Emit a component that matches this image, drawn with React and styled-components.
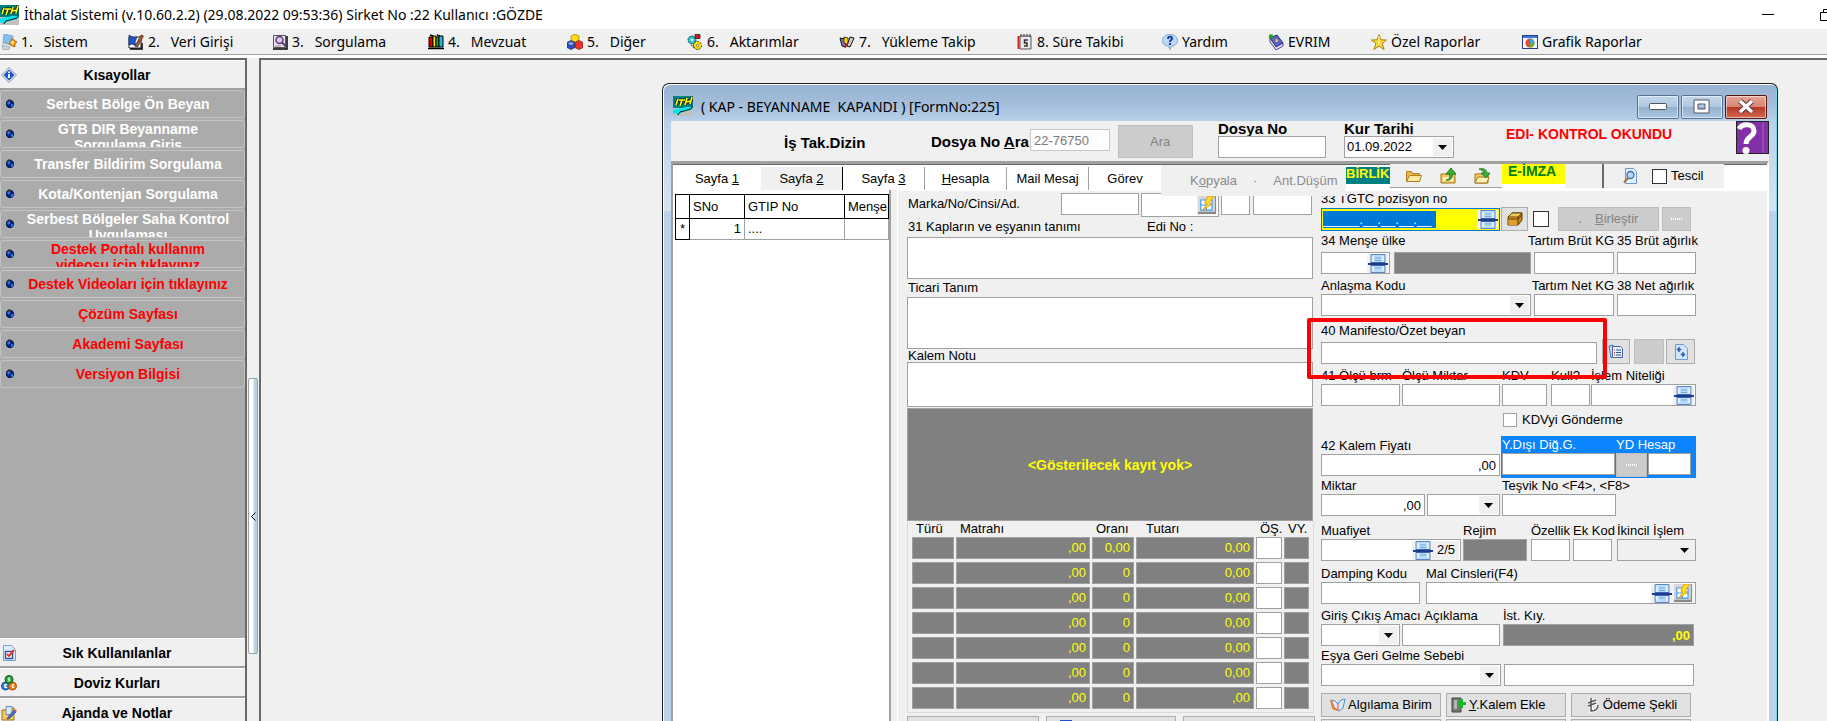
import React, { useId } from "react";
import styled, { createGlobalStyle, css } from "styled-components";

const ui = '"Noto Sans", "Open Sans", sans-serif';
const form = '"Liberation Sans", Arial, sans-serif';
const c = { face: "#f0f0f0", line: "#a0a0a0", dark: "#696969", slate: "#808080", off: "#cccccc" };

const GlobalStyle = createGlobalStyle`
  *, *::before, *::after { box-sizing: border-box; }
  html, body, #root { height: 100%; }
  body { margin: 0; overflow: hidden; background: ${c.face}; color: #000; font: 13px/16px ${form}; }
  button, input, select, textarea { font: inherit; color: inherit; margin: 0; padding: 0; border-radius: 0; }
  svg { display: block; flex: none; }
`;

/* ---------- application shell ---------- */
const Shell = styled.div`
  display: flex; flex-direction: column; height: 100vh; overflow: hidden;
`;
const TitleBar = styled.header`
  display: flex; align-items: center; flex: none; height: 29px; background: #fff; overflow: hidden;
`;
const AppTitle = styled.h1`
  flex: 1; margin: 0 0 0 5px; font: 400 14px/20px ${ui}; white-space: nowrap;
`;
const SystemButton = styled.button`
  flex: none; width: ${(p) => p.$w}px; height: 29px; border: 0; background: none;
  display: flex; align-items: center; justify-content: ${(p) => (p.$end ? "flex-end" : "center")};
`;
const MenuBar = styled.nav`
  flex: none; height: 26px; background: ${c.face}; border-bottom: 1px solid ${c.line};
  display: grid; align-items: center;
  grid-template-columns: 127px 144px 156px 139px 120px 152px 178px 145px 106px 103px 151px auto;
  justify-content: start; padding-left: 1px;
`;
const MenuItem = styled.button`
  display: flex; align-items: center; gap: 4px; border: 0; background: none;
  font: 14px/20px ${ui}; white-space: pre; text-align: left;
`;
const Work = styled.main`
  flex: 1; min-height: 0; display: grid; grid-template-columns: 247px 12px 1fr;
  border-top: 3px solid #fff;
`;

/* ---------- side bar ---------- */
const Side = styled.aside`
  display: flex; flex-direction: column; min-height: 0; overflow: hidden; background: #ababab;
  border-top: 2px solid ${c.dark}; border-right: 2px solid ${c.dark};
`;
const SideHead = styled.button`
  flex: none; display: flex; align-items: center; height: 30px; width: 100%;
  padding: 0 28px 0 1px; border: 0; border-top: 1px solid #fff; border-bottom: 2px solid ${c.line};
  background: ${c.face}; font-weight: 700; font-size: 14px;
  span { flex: 1; text-align: center; }
`;
const SideList = styled.ul`
  flex: 1; min-height: 0; margin: 0; padding: 0; list-style: none;
  display: flex; flex-direction: column; gap: 2px;
`;
const SideLink = styled.button`
  display: flex; align-items: center; gap: 10px; width: 100%; height: 28px; overflow: hidden;
  padding: 0 13px 0 4px; border: 1px solid #c3c3c3; border-radius: 3px; background: none;
  color: ${(p) => (p.$hot ? "#ff0000" : "#fff")}; font-weight: 700; font-size: 14px;
  span { flex: 1; max-height: 26px; overflow: hidden; text-align: center; }
`;
const SideFoot = styled.div`
  flex: none; height: 83px; overflow: hidden;
`;
const Splitter = styled.div`
  display: flex; flex-direction: column; padding: 320px 1px 0 1px; background: ${c.face};
`;
const SplitHandle = styled.button`
  height: 276px; width: 10px; border: 1px solid ${c.line}; border-radius: 2px;
  background: linear-gradient(90deg, #fff 50%, #bfdcea 60%, #b0cfe0);
  display: flex; align-items: center; justify-content: center;
`;

/* ---------- child window ---------- */
const Mdi = styled.section`
  min-width: 0; min-height: 0; display: flex; overflow: hidden; background: ${c.face};
  border-top: 2px solid ${c.dark}; border-left: 2px solid ${c.dark}; padding: 23px 49px 0 401px;
`;
const Child = styled.article`
  flex: 1; min-width: 0; display: flex; flex-direction: column; overflow: hidden;
  border: 1px solid #222; border-bottom: 0; border-radius: 7px 7px 0 0; padding: 0 8px;
  box-shadow: inset 1px 1px 0 #fff, inset -1px 0 0 #6fd9e4;
  background: linear-gradient(#98b4d2 0, #a3bddb 20px, #b9d1ea 38px, #d6e4f3 126px, #b9d1ea 128px);
`;
const ChildBar = styled.header`
  flex: none; display: flex; align-items: center; height: 37px; padding: 0 2px;
`;
const ChildTitle = styled.h2`
  flex: 1; margin: 0 0 0 8px; font: 400 14px/20px ${ui}; white-space: pre; padding-top: 8px;
`;
const LogoSlot = styled.span` padding-top: 6px; `;
const CaptionButton = styled.button`
  width: 42px; height: 24px; margin: 8px 0 0 2px; border: 1px solid ${(p) => (p.$close ? "#5a1410" : "#58728f")};
  border-radius: 2px; display: flex; align-items: center; justify-content: center;
  box-shadow: inset 0 0 0 1px rgba(255, 255, 255, 0.55);
  background: ${(p) => p.$close
    ? "linear-gradient(#e6a596 0, #d98574 48%, #b8392a 52%, #cf6a50 100%)"
    : "linear-gradient(#c3d6ea 0, #b0c8e2 48%, #94b1d0 52%, #abc6e0 100%)"};
`;

const SearchStrip = styled.div`
  flex: none; display: flex; height: 40px; background: ${c.face};
`;
const Strong = styled.span`
  font-weight: 700; font-size: 15px; line-height: 14px; white-space: nowrap;
`;
const StripTitle = styled(Strong)` width: 147px; padding: 15px 0 0 0; margin-left: 113px; `;
const StripLabel = styled(Strong)` width: 99px; padding-top: 14px; `;
const StripBox = styled.div` padding-top: ${(p) => p.$top}px; width: ${(p) => p.$w}px; margin-right: ${(p) => p.$gap}px; `;
const Stack = styled.div`
  display: flex; flex-direction: column; width: ${(p) => p.$w}px; margin-right: ${(p) => p.$gap}px;
  padding-top: 1px;
`;
const Alert = styled.strong`
  flex: 1; padding-top: 5px; color: #ff0000; font-size: 14px; white-space: nowrap;
`;

const TabStrip = styled.div`
  flex: none; display: flex; align-items: flex-start; height: 29px; background: #fff;
  border-top: 3px solid ${c.line}; border-left: 2px solid ${c.line}; border-right: 2px solid #fff;
  box-shadow: inset 0 1px 0 ${c.dark};
`;
const Tab = styled.button`
  flex: none; display: flex; align-items: center; justify-content: center;
  width: ${(p) => p.$w}px; height: 23px; margin-top: 3px; border: 0; white-space: pre;
  background: ${(p) => (p.$on ? c.face : "#fff")};
  border-right: ${(p) => (p.$on ? "1px solid #000" : p.$rule ? `1px solid ${c.line}` : "0")};
`;
const Disabled = styled.div`
  flex: none; position: relative; z-index: 1; display: flex; align-items: center; gap: 16px;
  width: 185px; height: 31px; padding-left: 29px; margin-top: 1px; background: ${c.face};
`;
const PlainButton = styled.button`
  border: 0; background: none; white-space: nowrap; color: #8b8b8b;
`;
const Chip = styled.strong`
  flex: none; display: block; background: ${(p) => p.$bg}; color: ${(p) => p.$fg};
  font-size: ${(p) => p.$fs}px; line-height: ${(p) => p.$fs + 1}px; height: ${(p) => p.$h}px; width: ${(p) => p.$w}px;
  margin-top: ${(p) => p.$mt || 0}px; padding-left: ${(p) => p.$pl}px; white-space: nowrap;
`;
const Folders = styled.div`
  flex: none; display: flex; align-items: center; gap: 18px; width: 112px; height: 24px; padding-left: 16px;
  background: ${c.face}; border-bottom: 1px solid ${c.line};
`;
const IconButton = styled.button` border: 0; background: none; display: flex; `;
const Blank = styled.div` width: 39px; height: 24px; background: ${c.face}; border-right: 2px solid ${c.dark}; `;
const Register = styled.div`
  display: flex; align-items: center; gap: 14px; width: 120px; height: 24px; padding-left: 18px;
  background: ${c.face};
  label { display: flex; align-items: center; gap: 4px; }
`;
const Check = styled.input`
  appearance: none; width: ${(p) => p.$s}px; height: ${(p) => p.$s}px; flex: none;
  border: 1px solid ${(p) => (p.$strong ? "#333" : c.line)}; background: #fff;
`;

const Body = styled.div`
  flex: 1; min-height: 0; display: grid; grid-template-columns: 220px 6px minmax(0, 1fr); background: ${c.face};
  overflow: hidden;
`;
const ListPane = styled.div`
  background: #fff; padding: 4px 0 0 2px; border-left: 2px solid ${c.line}; border-right: 2px solid ${c.line};
`;
const Grid = styled.table`
  table-layout: fixed; width: 100%; border-collapse: collapse; font-size: 13px;
  th, td { padding: 0 3px; font-weight: 400; text-align: left; overflow: hidden; white-space: nowrap; }
  th { height: 24px; border: 1px solid #000; }
  td { height: 21px; border: 1px solid ${c.line}; }
  td:first-child { border: 1px solid #000; padding: 0; text-align: center; }
  td:nth-child(2) { text-align: right; }
`;
const Col = styled.col` width: ${(p) => p.$w}px; `;
const FormPane = styled.div`
  display: flex; gap: 6px; padding: 0 0 0 9px; border-top: 1px solid #fff; border-left: 1px solid #fff;
  border-right: 2px solid #fff; overflow: hidden;
`;

/* ---------- form parts ---------- */
const inputBox = css`
  display: block; height: 22px; width: 100%; border: 1px solid ${c.line}; background: #fff;
  padding: 0 3px; outline: none;
`;
const Box = styled.input`
  ${inputBox}
  ${(p) => p.$muted && css`color: #7a7a7a; border-color: #c8c8c8;`}
  ${(p) => p.$dark && css`background: ${c.slate}; color: #ffff00; font-weight: 700;`}
  text-align: ${(p) => (p.$right ? "right" : "left")};
`;
const Combo = styled.div`
  display: flex; align-items: center; height: ${(p) => p.$h || 22}px; width: 100%; border: 1px solid ${c.line};
  background: ${(p) => (p.$flat ? c.face : "#fff")}; padding-right: 1px;
  input, select { flex: 1; min-width: 0; width: 0; height: 20px; border: 0; background: none; outline: none; padding-left: 2px; appearance: none; }
`;
const Arrow = styled.span`
  width: 19px; height: 18px; background: ${c.face}; display: flex; align-items: center; justify-content: center;
`;
const MiniButton = styled.button`
  display: flex; align-items: center; justify-content: ${(p) => (p.$start ? "flex-start" : "center")}; gap: 2px; flex: none; white-space: nowrap;
  width: ${(p) => p.$w}px; height: ${(p) => p.$h || 24}px; padding-left: ${(p) => p.$start || 0}px;
  border: 1px solid ${(p) => (p.$off ? "#bfbfbf" : "#adadad")}; background: ${(p) => (p.$off ? c.off : "#e1e1e1")};
  color: ${(p) => (p.$off ? "#838383" : "#000")};
`;
const Inset = styled.button`
  flex: none; height: 19px; border: 0; background: ${c.face}; width: ${(p) => p.$w}px;
  display: flex; align-items: center; justify-content: center;
`;
const Row = styled.div`
  position: relative; display: flex; align-items: ${(p) => p.$align || "flex-end"}; margin-top: ${(p) => p.$gap || 0}px;
`;
const FieldBox = styled.div`
  flex: none; display: flex; flex-direction: column; width: ${(p) => p.$w}px; margin-right: ${(p) => p.$mr ?? 3}px;
  align-items: ${(p) => p.$align || "flex-start"};
`;
const Spacer = styled.div` flex: none; width: ${(p) => p.$w}px; `;
const Label = styled.label` display: block; height: ${(p) => (p.$tall ? 19 : 16)}px; white-space: nowrap; `;

const column = css`
  flex: none; display: flex; flex-direction: column;
  > * { flex-shrink: 0; }
`;
const Middle = styled.div` ${column} width: 408px; `;
const Right = styled.div` ${column} width: 380px; `;
const Area = styled.textarea`
  display: block; width: 406px; height: ${(p) => p.$h}px; border: 1px solid ${c.line}; background: #fff; resize: none; outline: none;
`;
const Caption = styled.label`
  display: flex; align-items: center; height: ${(p) => p.$h}px; padding-left: 1px; white-space: nowrap;
`;
const CaptionRow = styled.div` display: grid; grid-template-columns: 239px 1fr; `;
const Empty = styled.div`
  display: flex; align-items: center; justify-content: center; width: 406px; height: 113px; margin-top: 1px;
  border: 1px solid ${c.line}; background: ${c.slate}; color: #ffff00; font-weight: 700; font-size: 14px;
`;
const Taxes = styled.table`
  table-layout: fixed; width: 407px; border-collapse: separate; border-spacing: 2px 3px; padding: 0 2px;
  border: 1px solid #dcdcdc; border-top: 0;
  th { height: 10px; padding: 0 0 0 4px; font-weight: 400; text-align: left; line-height: 10px; white-space: nowrap; }
  th.wide { padding-left: 10px; }
  td { height: 22px; padding: 0 3px; border: 1px solid ${c.line}; background: ${c.slate}; color: #ffff00; text-align: right; line-height: 16px; }
  td.open { padding: 0; background: #fff; }
  td input { display: block; width: 100%; height: 20px; border: 0; background: none; outline: none; }
`;
const Buttons = styled.div`
  display: flex; gap: ${(p) => p.$g}px; margin-top: ${(p) => p.$gap}px;
`;
const Goods = styled.div`
  display: flex; align-items: center; width: 179px; height: 23px; margin-right: 1px; border: 1px solid #0078d7; padding: 1px;
  background: #ffff00;
`;
const Mask = styled.input`
  width: 113px; height: 17px; border: 0; outline: none; background: #0078d7; color: #fff; line-height: 16px; margin-right: auto;
`;
const Foreign = styled.div`
  display: grid; grid-template-columns: 113px 31px 43px; column-gap: 1px; width: 195px; height: 42px; padding: 1px 1px 0;
  background: #0a84ff; color: #fff; align-content: start;
  label { height: 16px; white-space: nowrap; }
  label:nth-child(2) { grid-column: 2 / 4; }
  input { color: #000; }
`;
const Marker = styled.div`
  position: absolute; left: -14px; top: -5px; width: 300px; height: 61px; border: 4px solid #ff0000; border-radius: 2px;
  pointer-events: none; z-index: 2;
`;
const CheckLine = styled.label`
  display: flex; align-items: center; gap: 5px; height: 14px; margin: 7px 0 9px 182px;
`;

/* ---------- drawings ---------- */
const Svg = ({ s = 16, h, children, vb }) => (
  <svg width={s} height={h || s} viewBox={vb || "0 0 16 16"} aria-hidden="true">{children}</svg>
);
const Logo = ({ s = 20 }) => (
  <svg width={s} height="20" viewBox={s === 20 ? "0 0 20 20" : "1 0 19 20"} preserveAspectRatio="none" aria-hidden="true">
    <rect width="20" height="20" fill="#c0c0c0" /><rect width="20" height="12" fill="#008080" />
    <path d="M0 14l13-3h7l-2 3-11 3-3 2-2-2-2 1z" fill="#00e5ee" /><path d="M5 19l2-3 11-3 2-3" fill="none" stroke="#111" />
    <path d="M3 9l2-6M6 4h6M7 10l2-6M12 9l2-7M17 8l2-7M13 6l5-1" fill="none" stroke="#111" strokeWidth="3.2" />
    <path d="M3 9l2-6M6 4h6M7 10l2-6M12 9l2-7M17 8l2-7M13 6l5-1" fill="none" stroke="#ffff00" strokeWidth="1.7" />
  </svg>
);
const icons = {
  system: <Svg><path d="M3 0l9 2-1 9-9-2z" fill="#7fc0f0" stroke="#8fa5b8" /><path d="M1 11l8 2-1 2.500H2z" fill="#c8d4de" stroke="#8090a0" strokeWidth=".6" /><path d="M11 4l2 2 3 2-2 2v3l-3-1-3-2 2-3z" fill="#f39a22" stroke="#9a5a14" strokeWidth=".7" /><circle cx="11.500" cy="8.500" r="1.600" fill="#ffe27a" /></Svg>,
  entry: <Svg><path d="M1 3h12v11H1z" fill="#fff" stroke="#223" /><path d="M1 1l5 3 3-1-2 5 1 4-4-2-3 1z" fill="#2355c8" stroke="#102a70" strokeWidth=".7" /><path d="M7 12l6-11 2.500 1-6 11z" fill="#a65a32" stroke="#4b2414" strokeWidth=".7" /><path d="M2 15h12V9" stroke="#000" fill="none" strokeWidth="1.500" /></Svg>,
  query: <Svg><path d="M1.500 1.500h12v12h-12z" fill="#ece6f2" stroke="#555" /><path d="M1 15h14V2" stroke="#000" fill="none" strokeWidth="1.500" /><circle cx="7.500" cy="6" r="3.500" fill="#d9c6ec" stroke="#5a3d78" strokeWidth="1.500" /><path d="M10 8.500l4 4" stroke="#5a3d78" strokeWidth="2" /><path d="M3 12h6" stroke="#888" /></Svg>,
  books: <Svg><path d="M1 3h4v10H1z" fill="#d00" stroke="#000" /><path d="M5 2h3v11H5z" fill="#ffe100" stroke="#000" /><path d="M8 3h3v10H8z" fill="#1aa34a" stroke="#000" /><path d="M11 2h4v11h-4z" fill="#22b5d8" stroke="#000" /><path d="M0 14.500h16M2 1l3 1M9 1l3 1" stroke="#000" strokeWidth="1.500" /></Svg>,
  cubes: <Svg><path d="M8 0l4 2v4L8 8.500 4 6V2z" fill="#ffd91a" stroke="#a87b00" strokeWidth=".7" /><path d="M4 6.500l4 2v5l-4 2-4-2v-5z" fill="#2c4fc4" stroke="#14286c" strokeWidth=".7" /><path d="M4 8l3 1.500-3 1.500-3-1.500z" fill="#9db4f5" /><path d="M12 6.500l4 2v5l-4 2-4-2v-5z" fill="#e8352a" stroke="#7c120c" strokeWidth=".7" /></Svg>,
  transfer: <Svg><circle cx="5" cy="6" r="4" fill="#22c4c8" stroke="#245" strokeDasharray="2 1" /><circle cx="10.500" cy="11.500" r="4" fill="#ffe100" stroke="#332" strokeDasharray="2 1" /><path d="M8 .5h5v4H8zM4 11l4 3" fill="#e3131c" stroke="#222" strokeWidth=".8" /><circle cx="5" cy="6" r="1.300" fill="#fff" /><circle cx="10.500" cy="11.500" r="1.200" fill="#fff" stroke="#333" strokeWidth=".6" /></Svg>,
  loading: <Svg><path d="M1 4l5 1 1 8-4-1z" fill="#77c" stroke="#111" /><path d="M5 3l4 1v7l-4-2z" fill="#ffe100" stroke="#111" strokeWidth=".8" /><path d="M8 12l3-9 4 1-4 9z" fill="#cfcfcf" stroke="#111" /><path d="M6 14l3-6" stroke="#d22" strokeWidth="1.500" /></Svg>,
  time: <Svg><path d="M3 2h11v13H3z" fill="#e9e9ee" stroke="#555" /><path d="M1.500 2v13" stroke="#d22" strokeWidth="2" /><path d="M4 0v3M7 0v3M10 0v3M13 0v3" stroke="#333" /><path d="M11 6H7.500v3H10v3H7" stroke="#333" fill="none" strokeWidth="1.500" /></Svg>,
  help: <Svg><path d="M8 .5c4.500 0 7.500 2.500 7.500 6S12.500 12 9.500 12L8 15.500 6.500 12C3.500 12 .5 10 .5 6.500S3.500.5 8 .5z" fill="#bcd9f4" stroke="#7aa3cc" /><path d="M6 5c0-3 4-3 4-.500C10 6 8 6 8 8" stroke="#1c3fa0" fill="none" strokeWidth="2" /><rect x="7" y="9" width="2" height="2" fill="#1c3fa0" /></Svg>,
  evrim: <Svg><path d="M2 4l7-3 6 8-7 4z" fill="#5b62c8" stroke="#23286c" /><path d="M8 13l7-4v3l-7 4-6-8V4z" fill="#dfe2f4" stroke="#23286c" strokeWidth=".8" /><circle cx="3" cy="2.500" r="2.300" fill="#22a322" /><path d="M8 5l1.500 3M7.300 7.300L10 6" stroke="#ffc83a" strokeWidth="1.300" /></Svg>,
  star: <Svg><path d="M8 .5l1.900 5.300 5.600.200-4.400 3.400 2 6.100L8 12l-5.100 3.500 2-6.100L.5 6l5.600-.200z" fill="#ffd93a" stroke="#b07f12" /><path d="M8 2v9" stroke="#fff3b0" /></Svg>,
  chart: <Svg><rect x=".5" y="1.500" width="15" height="13" fill="#f4f6ff" stroke="#2a3a8c" /><rect x="1" y="2" width="14" height="2" fill="#3d7be0" /><circle cx="8" cy="9" r="4.500" fill="#e8482e" /><path d="M8 9V4.500A4.500 4.500 0 0 1 12.500 9z" fill="#38a8e0" /><path d="M8 9h4.500A4.500 4.500 0 0 1 8 13.500z" fill="#57b544" /></Svg>,
  info: <Svg><path d="M8 .5L15.500 8 8 15.500.5 8z" fill="#dfe5f2" stroke="#8b98b8" /><path d="M8 2.500L13.500 8 8 13.500 2.500 8z" fill="#1d56d0" /><path d="M8 7v4M8 4.500v1.500" stroke="#fff" strokeWidth="2" /></Svg>,
  tick: <Svg><path d="M2.500.5h8l4 4v11h-12z" fill="#dcecfb" stroke="#7ba0cc" /><rect x="4.500" y="6.500" width="7" height="7" fill="#fff" stroke="#2b4f9e" strokeWidth="1.400" /><path d="M6 9l2 2 5-6" stroke="#e8361c" strokeWidth="2" fill="none" /></Svg>,
  money: <Svg><circle cx="4.500" cy="11" r="4" fill="#2f7cd6" stroke="#1a4f92" /><circle cx="11.500" cy="11" r="4" fill="#ef7e1a" stroke="#a84f08" /><circle cx="8" cy="4.500" r="4" fill="#1f9d2e" stroke="#0c6117" /><path d="M9.500 3H7.200v1.500h1.600V6H6.500M6 9.500H3.800v3H6M3 11h2.500M13 9.500h-1.500v3h1.800M10.500 11H13" stroke="#fff" fill="none" /></Svg>,
  notes: <Svg><path d="M1 5h5l1-2h6v12H1z" fill="#f5c95c" stroke="#9c7018" /><path d="M5 1.500h6v8H5z" fill="#d9ebfb" stroke="#6c8fc0" /><path d="M7 12l6-7 2 2-6 6-3 1z" fill="#4a6cc8" stroke="#27408c" strokeWidth=".7" /><path d="M13 5l1-1 2 2-1 1z" fill="#e86a2a" /></Svg>,
  folder: <Svg><path d="M.5 13.500v-10h5l1 2h7v8z" fill="#e8b948" stroke="#b07c1c" /><path d="M.5 13.500l3-6h12l-2 6z" fill="#ffe9a0" stroke="#b07c1c" /></Svg>,
  folderUp: <Svg><path d="M1 15V6h14v9z" fill="#f4cd65" stroke="#a5741a" /><path d="M3 9h10v4H3z" fill="#fff0b8" /><path d="M6 12c3 0 4-2 3.500-6H6l5-6 5 6h-3.500c0 5-3 7-6.500 6z" fill="#38b034" stroke="#14701a" strokeWidth=".8" /></Svg>,
  folderIn: <Svg><path d="M1 15V6h13v9z" fill="#f4cd65" stroke="#a5741a" /><path d="M1 15l3-6h11l-2 6z" fill="#fff0b8" stroke="#a5741a" /><path d="M5 1c5-1 7 0 8 4h3l-4 5-5-5h3C9.500 3 8 2 5 1z" fill="#38b034" stroke="#14701a" strokeWidth=".8" /></Svg>,
  lens: <Svg><path d="M3.500.5h8l3 3v12h-11z" fill="#e4f0fc" stroke="#6f9ad0" /><circle cx="8.500" cy="7" r="3.500" fill="#b6d8f5" stroke="#3c6fae" strokeWidth="1.300" /><path d="M6 10l-4 4.500" stroke="#a86c3a" strokeWidth="2" /></Svg>,
  cube: <Svg><path d="M1 6l4-4h10v7l-4 5H1z" fill="#c98a14" stroke="#5c3c04" /><path d="M1 6l4-4h10l-4 4z" fill="#f4c85a" stroke="#5c3c04" /><path d="M1.500 6.500H11V14H1.500z" fill="#e0a02a" /><path d="M11 6v8M1 8h10l4-4" stroke="#5c3c04" fill="none" /></Svg>,
  docs: <Svg><path d="M1 2l4-1v11l-2 2z" fill="#c4dbf3" stroke="#4571ad" /><path d="M4.500 2.500h8l2 2v9h-10z" fill="#e9f3fd" stroke="#3c68ab" /><path d="M8 6h5M8 8.500h5M8 11h5" stroke="#2b4f9e" /><path d="M6 6h1M6 8.500h1M6 11h1" stroke="#d22" /></Svg>,
  page: <Svg><path d="M2.500.5h8l4 4v11h-12z" fill="#cfe5fa" stroke="#6f9ad0" /><path d="M6 3v5M3.800 5.500h4.400M10 8v5M7.800 10.500h4.400" stroke="#2a55a8" strokeWidth="1.400" /></Svg>,
  openBook: <Svg><path d="M1 3l4 1 3 3 3-4 4-1-2 9-4 3-4-2z" fill="#dceefb" stroke="#4c8fd0" /><path d="M1 3l2 8 4 2" stroke="#ef7a2a" strokeWidth="2" fill="none" /><path d="M8 7v6" stroke="#e8482e" /></Svg>,
  addItem: <Svg><path d="M1 1h9v14H1z" fill="#777" stroke="#444" /><path d="M3 3h3v9H3z" fill="#b5b5b5" /><path d="M10.500 2v9M6 6.500h9" stroke="#12b81e" strokeWidth="3" /></Svg>,
  lira: <Svg><path d="M6 1v13c4 0 7-2 7-6M3 6l8-3M3 9l8-3" stroke="#fff" strokeWidth="3.500" fill="none" /><path d="M6 1v13c4 0 7-2 7-6M3 6l8-3M3 9l8-3" stroke="#555" strokeWidth="1.500" fill="none" /></Svg>,
  save: <Svg><path d="M1 0h12v15H1z" fill="#1c4fc8" /><path d="M4 3h7v5H4z" fill="#fff" /></Svg>,
};
const Globe = () => (
  <Svg s={10}><circle cx="8" cy="8" r="7.500" fill="#0b1f66" stroke="#e8e8e8" /><path d="M4 5l3-2 2 3-3 3-2-1zM9 9l4-2v4l-3 2z" fill="#2a7cf0" /><path d="M2 4l4-3 4 1" stroke="#554a10" strokeWidth="1.500" fill="none" /></Svg>
);
const Roll = () => (
  <Svg s={20} h={19} vb="0 0 20 19">
    <path d="M3 .5h14v18H3z" fill="#b9dcfa" stroke="#5f86c4" /><path d="M5 2v15M15 2v15" stroke="#fff" />
    <path d="M7 4h6M7 6.500h6M7 14h6" stroke="#6fa8e0" /><path d="M3 8h14v4H3z" fill="#3c62b4" /><path d="M0 10h20" stroke="#1c3c8c" strokeWidth="2" />
  </Svg>
);
const Flash = () => (
  <Svg s={18}><rect x="0" y="0" width="16" height="16" fill="#8a8a8a" /><rect x="0" y="0" width="15" height="14" fill="#d7d7d7" /><path d="M2.500 3.500h10v9h-10z" fill="#fff" stroke="#3c9be8" /><path d="M2.500 8h10M7.500 3.500v9" stroke="#3c9be8" /><path d="M14 0H9L6 6l2 1-4 6 8-6-2-1z" fill="#ffe11a" stroke="#e0901a" strokeWidth=".8" /></Svg>
);
const Tri = () => <svg width="9" height="5" viewBox="0 0 9 5" aria-hidden="true"><path d="M0 0h9L4.500 5z" /></svg>;
const Dots = () => <svg width="11" height="3" viewBox="0 0 11 3" aria-hidden="true"><path d="M0 1h11" stroke="#fff" strokeWidth="2" strokeDasharray="1 1" /></svg>;

/* ---------- composed controls ---------- */
const Field = ({ label, w, mr, align, tall, children }) => {
  const id = useId();
  return (
    <FieldBox $w={w} $mr={mr} $align={align}>
      {label && <Label htmlFor={id} $tall={tall}>{label}</Label>}
      {children(id)}
    </FieldBox>
  );
};
const TextField = ({ value, right, dark, ...rest }) => (
  <Field {...rest}>{(id) => <Box id={id} defaultValue={value} $right={right} $dark={dark} readOnly={dark} />}</Field>
);
const Drop = ({ id, value, flat, name }) => (
  <Combo $flat={flat}>
    <select id={id} aria-label={name}>{value ? <option>{value}</option> : <option aria-label="-" />}</select>
    <Arrow><Tri /></Arrow>
  </Combo>
);
const SelectField = ({ flat, ...rest }) => <Field {...rest}>{(id) => <Drop id={id} flat={flat} />}</Field>;
const RollField = ({ extra, ...rest }) => (
  <Field {...rest}>
    {(id) => <Combo><input id={id} /><Inset $w={21} aria-label="Listeden seç"><Roll /></Inset>{extra}</Combo>}
  </Field>
);

const menu = [
  ["system", "1.   Sistem"], ["entry", "2.   Veri Girişi"], ["query", "3.   Sorgulama"], ["books", "4.   Mevzuat"],
  ["cubes", "5.   Diğer"], ["transfer", "6.   Aktarımlar"], ["loading", "7.   Yükleme Takip"], ["time", "8. Süre Takibi"],
  ["help", "Yardım"], ["evrim", "EVRIM"], ["star", "Özel Raporlar"], ["chart", "Grafik Raporlar"],
];
const shortcuts = [
  ["Serbest Bölge Ön Beyan"], ["GTB DIR Beyanname Sorgulama Giriş"], ["Transfer Bildirim Sorgulama"],
  ["Kota/Kontenjan Sorgulama"], ["Serbest Bölgeler Saha Kontrol Uygulaması"],
  ["Destek Portalı kullanım videosu için tıklayınız", true], ["Destek Videoları için tıklayınız", true],
  ["Çözüm Sayfası", true], ["Akademi Sayfası", true], ["Versiyon Bilgisi", true],
];
const taxRows = [["0,00", "0,00"], ["0", "0,00"], ["0", "0,00"], ["0", "0,00"], ["0", "0,00"], ["0", "0,00"], ["0", ",00"]];

function Sidebar() {
  return (
    <Side>
      <SideHead>{icons.info}<span>Kısayollar</span></SideHead>
      <SideList>
        {shortcuts.map(([t, hot]) => <li key={t}><SideLink $hot={hot}><Globe /><span>{t}</span></SideLink></li>)}
      </SideList>
      <SideFoot>
        <SideHead>{icons.tick}<span>Sık Kullanılanlar</span></SideHead>
        <SideHead>{icons.money}<span>Doviz Kurları</span></SideHead>
        <SideHead>{icons.notes}<span>Ajanda ve Notlar</span></SideHead>
      </SideFoot>
    </Side>
  );
}

function Search() {
  return (
    <SearchStrip>
      <StripTitle>İş Tak.Dizin</StripTitle>
      <StripLabel as="label" htmlFor="find">Dosya No <u>A</u>ra</StripLabel>
      <StripBox $top={8} $w={80} $gap={8}><Box id="find" $muted defaultValue="22-76750" /></StripBox>
      <StripBox $top={4} $w={75} $gap={25}><MiniButton $off $w={75} $h={33} $start={31}>Ara</MiniButton></StripBox>
      <Stack $w={108} $gap={18}><Strong as="label" htmlFor="file">Dosya No</Strong><Box id="file" /></Stack>
      <Stack $w={110} $gap={52}><Strong as="label" htmlFor="rate">Kur Tarihi</Strong><Drop id="rate" value="01.09.2022" /></Stack>
      <Alert>EDI- KONTROL OKUNDU</Alert>
      <IconButton aria-label="Yardım">
        <svg width="33" height="33" viewBox="0 0 33 33" aria-hidden="true">
          <rect x=".5" y=".5" width="32" height="32" fill="#8330a8" stroke="#222" /><path d="M27 1v31" stroke="#a66bc2" />
          <path d="M3 8c3-6 15-6 15 2 0 6-8 5-8 13" fill="none" stroke="#fff" strokeWidth="5" /><circle cx="10" cy="29.500" r="3.500" fill="#fff" />
        </svg>
      </IconButton>
    </SearchStrip>
  );
}

function Tabs() {
  return (
    <TabStrip>
      <Tab $w={88}>Sayfa <u>1</u></Tab><Tab $w={82} $on>Sayfa <u>2</u></Tab><Tab $w={82} $rule>Sayfa <u>3</u></Tab>
      <Tab $w={82} $rule><u>H</u>esapla</Tab><Tab $w={82} $rule>Mail Mesaj</Tab><Tab $w={72}>Görev</Tab>
      <Disabled><PlainButton>K<u>o</u>pyala</PlainButton><PlainButton>·</PlainButton><PlainButton>Ant.Düşüm</PlainButton></Disabled>
      <Chip $bg="#008080" $fg="#ffff00" $fs={13} $w={44} $h={17} $mt={3} $pl={0}>BİRLİK</Chip>
      <Folders>
        <IconButton aria-label="Aç">{icons.folder}</IconButton><IconButton aria-label="Yükle">{icons.folderUp}</IconButton>
        <IconButton aria-label="Al">{icons.folderIn}</IconButton>
      </Folders>
      <Chip $bg="#ffff00" $fg="#008000" $fs={14} $w={63} $h={20} $pl={6}>E-İMZA</Chip>
      <Blank />
      <Register>{icons.lens}<label><Check type="checkbox" $s={15} $strong />Tescil</label></Register>
    </TabStrip>
  );
}

function MiddleForm() {
  return (
    <Middle>
      <Row $align="flex-start" $gap={2}>
        <FieldBox $w={154} $mr={0}><Caption $h={22} htmlFor="brand">Marka/No/Cinsi/Ad.</Caption></FieldBox>
        <FieldBox $w={78} $mr={2}><Box id="brand" /></FieldBox>
        <FieldBox $w={78} $mr={2}><Combo $h={24}><input aria-label="No" /><Inset $w={20} aria-label="Doldur"><Flash /></Inset></Combo></FieldBox>
        <FieldBox $w={29}><Box aria-label="Cinsi" /></FieldBox>
        <FieldBox $w={59} $mr={0}><Box aria-label="Ad" /></FieldBox>
      </Row>
      <CaptionRow><Caption $h={20} htmlFor="goods">31 Kapların ve eşyanın tanımı</Caption><Caption as="span" $h={20}>Edi No :</Caption></CaptionRow>
      <Area id="goods" $h={42} />
      <Caption $h={18} htmlFor="trade">Ticari Tanım</Caption>
      <Area id="trade" $h={52} />
      <Caption $h={13} htmlFor="note">Kalem Notu</Caption>
      <Area id="note" $h={45} />
      <Empty>&lt;Gösterilecek kayıt yok&gt;</Empty>
      <Taxes>
        <colgroup><Col $w={42} /><Col $w={134} /><Col $w={42} /><Col $w={118} /><Col $w={26} /><col /></colgroup>
        <thead><tr><th>Türü</th><th>Matrahı</th><th>Oranı</th><th className="wide">Tutarı</th><th>ÖŞ.</th><th>VY.</th></tr></thead>
        <tbody>
          {taxRows.map(([rate, total], i) => (
            <tr key={i}><td /><td>,00</td><td>{rate}</td><td>{total}</td><td className="open"><input aria-label="ÖŞ." /></td><td /></tr>
          ))}
        </tbody>
      </Taxes>
      <Buttons $g={7} $gap={3}>
        <MiniButton $w={132} aria-label="Önceki" /><MiniButton $w={130} $start={12} aria-label="Kaydet">{icons.save}</MiniButton><MiniButton $w={132} aria-label="Sonraki" />
      </Buttons>
    </Middle>
  );
}

function RightForm() {
  return (
    <Right>
      <Label htmlFor="gtc">33 TGTC pozisyon no</Label>
      <Row $align="center">
        <Goods><Mask id="gtc" defaultValue="_____.__.__.__.__" /><Inset $w={21} aria-label="Listeden seç"><Roll /></Inset></Goods>
        <MiniButton $w={27} aria-label="Ürün">{icons.cube}</MiniButton>
        <Spacer $w={5} />
        <Check type="checkbox" $s={16} $strong aria-label="Seç" />
        <Spacer $w={9} />
        <MiniButton $off $w={101}>.&nbsp;&nbsp;&nbsp;<span><u>B</u>irleştir</span></MiniButton>
        <Spacer $w={3} />
        <MiniButton $off $w={29} aria-label="Diğer"><Dots /></MiniButton>
      </Row>
      <Row $gap={2}>
        <RollField label="34 Menşe ülke" w={69} mr={4} tall />
        <FieldBox $w={137}><Box $dark readOnly aria-label="Ülke adı" /></FieldBox>
        <TextField label="Tartım Brüt KG" w={80} align="flex-end" tall /><TextField label="35 Brüt ağırlık" w={79} tall />
      </Row>
      <Row $gap={4}>
        <SelectField label="Anlaşma Kodu" w={210} />
        <TextField label="Tartım Net KG" w={80} align="flex-end" /><TextField label="38 Net ağırlık" w={79} />
      </Row>
      <Row $gap={7}>
        <TextField label="40 Manifesto/Özet beyan" w={276} mr={5} tall />
        <MiniButton $w={28} $h={25} aria-label="Belgeler">{icons.docs}</MiniButton><Spacer $w={4} />
        <MiniButton $off $w={30} $h={25} aria-label="Boş" /><Spacer $w={2} />
        <MiniButton $w={29} $h={25} aria-label="Yeni sayfa">{icons.page}</MiniButton>
        <Marker />
      </Row>
      <Row $gap={4}>
        <TextField label="41 Ölçü brm" w={79} mr={2} /><TextField label="Ölçü Miktar" w={98} mr={2} />
        <TextField label="KDV" w={45} mr={4} /><TextField label="Kull?" w={39} mr={1} />
        <RollField label="İşlem Niteliği" w={105} />
      </Row>
      <CheckLine><Check type="checkbox" $s={14} />KDVyi Gönderme</CheckLine>
      <Row $align="center">
        <TextField label="42 Kalem Fiyatı" w={179} mr={1} value=",00" right />
        <Foreign>
          <label htmlFor="abroad">Y.Dışı Diğ.G.</label><label htmlFor="account">YD Hesap</label>
          <Box id="abroad" /><MiniButton $off $w={31} aria-label="Seç"><Dots /></MiniButton><Box id="account" />
        </Foreign>
      </Row>
      <Row>
        <TextField label="Miktar" w={104} mr={2} value=",00" right />
        <FieldBox $w={73} $mr={2}><Drop name="Birim" /></FieldBox>
        <TextField label="Teşvik No <F4>, <F8>" w={114} />
      </Row>
      <Row $gap={7}>
        <RollField label="Muafiyet" w={140} mr={2} extra={<Inset $w={26}>2/5</Inset>} />
        <TextField label="Rejim" w={64} mr={4} dark /><TextField label="Özellik" w={39} /><TextField label="Ek Kod" w={39} mr={5} />
        <SelectField label="İkincil İşlem" w={79} flat />
      </Row>
      <Row $gap={5}>
        <TextField label="Damping Kodu" w={99} mr={6} />
        <RollField label="Mal Cinsleri(F4)" w={270} extra={<Inset $w={22} aria-label="Doldur"><Flash /></Inset>} />
      </Row>
      <Row $gap={4}>
        <SelectField label="Giriş Çıkış Amacı" w={79} mr={2} /><TextField label="Açıklama" w={98} align="center" />
        <TextField label="İst. Kıy." w={191} value=",00" right dark />
      </Row>
      <Row $gap={2}>
        <SelectField label="Eşya Geri Gelme Sebebi" w={180} /><FieldBox $w={190}><Box aria-label="Sebep açıklaması" /></FieldBox>
      </Row>
      <Buttons $g={5} $gap={7}>
        <MiniButton $w={120}>{icons.openBook}Algılama Birim</MiniButton>
        <MiniButton $w={120} $start={4}>{icons.addItem}<span><u>Y</u>.Kalem Ekle</span></MiniButton>
        <MiniButton $w={120}>{icons.lira}Ödeme Şekli</MiniButton>
      </Buttons>
      <Buttons $g={5} $gap={2}>
        <MiniButton $w={120} aria-label="Belge" /><MiniButton $w={120} aria-label="Kopya" /><MiniButton $w={120} aria-label="Kapat" />
      </Buttons>
    </Right>
  );
}

export default function App() {
  return (
    <Shell>
      <GlobalStyle />
      <TitleBar>
        <Logo s={19} />
        <AppTitle>İthalat Sistemi (v.10.60.2.2) (29.08.2022 09:53:36) Sirket No :22 Kullanıcı :GÖZDE</AppTitle>
        <SystemButton $w={46} aria-label="Küçült"><svg width="12" height="1" aria-hidden="true"><rect width="12" height="1" /></svg></SystemButton>
        <SystemButton $w={36} $end aria-label="Geri yükle">
          <svg width="7" height="12" viewBox="0 0 7 12" aria-hidden="true"><path d="M.5 3.500h9v8h-9zM3.500 3V.5H7" fill="none" stroke="#000" /></svg>
        </SystemButton>
      </TitleBar>
      <MenuBar>{menu.map(([i, t]) => <MenuItem key={t}>{icons[i]}{t}</MenuItem>)}</MenuBar>
      <Work>
        <Sidebar />
        <Splitter><SplitHandle aria-label="Paneli gizle"><svg width="5" height="9" viewBox="0 0 5 9" aria-hidden="true"><path d="M4.500.5l-4 4 4 4" fill="none" stroke="#000" /></svg></SplitHandle></Splitter>
        <Mdi>
          <Child>
            <ChildBar>
              <LogoSlot><Logo /></LogoSlot>
              <ChildTitle>{"( KAP - BEYANNAME  KAPANDI ) [FormNo:225]"}</ChildTitle>
              <CaptionButton aria-label="Küçült"><svg width="18" height="7" aria-hidden="true"><rect x=".5" y=".5" width="17" height="6" rx="1" fill="#fff" stroke="#555" /></svg></CaptionButton>
              <CaptionButton aria-label="Büyüt"><svg width="18" height="15" aria-hidden="true"><path d="M1 1h15v13H1zM5 5h7v5H5z" fill="#fff" fillRule="evenodd" stroke="#556" /></svg></CaptionButton>
              <CaptionButton $close aria-label="Kapat"><svg width="18" height="15" aria-hidden="true"><path d="M3 2l12 11M15 2L3 13" stroke="#5a3a3a" strokeWidth="5.500" /><path d="M3 2l12 11M15 2L3 13" stroke="#fff" strokeWidth="3.500" /></svg></CaptionButton>
            </ChildBar>
            <Search />
            <Tabs />
            <Body>
              <ListPane>
                <Grid>
                  <colgroup><Col $w={14} /><Col $w={55} /><Col $w={100} /><col /></colgroup>
                  <thead><tr><th aria-label="İşaret" /><th>SNo</th><th>GTIP No</th><th>Menşe</th></tr></thead>
                  <tbody><tr><td>*</td><td>1</td><td>....</td><td /></tr></tbody>
                </Grid>
              </ListPane>
              <div />
              <FormPane><MiddleForm /><RightForm /></FormPane>
            </Body>
          </Child>
        </Mdi>
      </Work>
    </Shell>
  );
}
